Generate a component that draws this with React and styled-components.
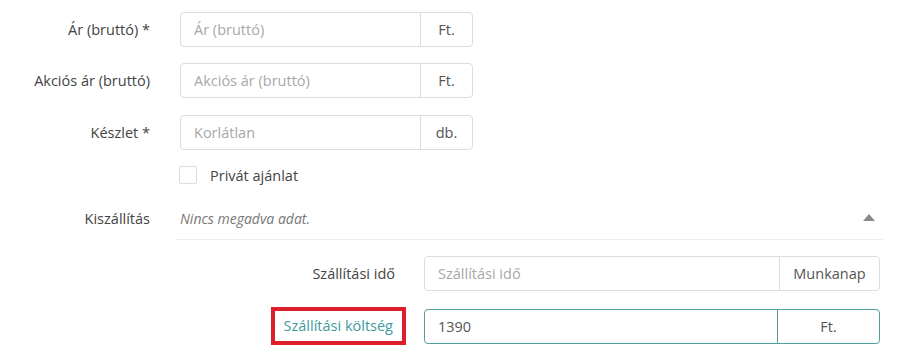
import React from "react";
import styled, { createGlobalStyle } from "styled-components";

const Global = createGlobalStyle`
  html, body { margin: 0; padding: 0; background: #fff; }
  body { font-family: "Open Sans", "Noto Sans", Arial, sans-serif; font-size: 14.5px; color: #444; }
`;

const Page = styled.div`
  width: 903px;
  height: 352px;
  overflow: hidden;
  padding-top: 12px;
  box-sizing: border-box;
`;

const Row = styled.div`
  display: grid;
  grid-template-columns: 150px 293px;
  column-gap: 30px;
  align-items: center;
  margin-bottom: ${(p) => p.$mb ?? 16}px;
`;

const Label = styled.label`
  text-align: right;
  color: #444;
  font-size: 14.5px;
`;

const Group = styled.div`
  display: flex;
  height: 35px;
  box-sizing: border-box;
  border: 1px solid ${(p) => (p.$active ? "#4d9fa0" : "#dcdcdc")};
  border-radius: 4px;
  background: #fff;
`;

const Input = styled.input`
  flex: 1;
  min-width: 0;
  border: none;
  outline: none;
  background: transparent;
  padding: 0 0 0 13px;
  font-family: inherit;
  font-size: 14.5px;
  color: #555;
  &::placeholder { color: #a8a8a8; }
`;

const Addon = styled.span`
  width: ${(p) => p.$w}px;
  flex: none;
  display: flex;
  align-items: center;
  justify-content: center;
  border-left: 1px solid ${(p) => (p.$active ? "#4d9fa0" : "#dcdcdc")};
  color: #555;
  font-size: 14.5px;
`;

const CheckRow = styled.div`
  display: flex;
  align-items: center;
  gap: 13px;
  margin-left: 179px;
  height: 18px;
  margin-bottom: 24px;
`;

const Box = styled.span`
  width: 18px;
  height: 18px;
  box-sizing: border-box;
  border: 1px solid #dcdcdc;
  border-radius: 2px;
`;

const CheckText = styled.span`
  color: #444;
  font-size: 14.5px;
`;

const ShipHead = styled.div`
  display: grid;
  grid-template-columns: 150px 1fr 20px;
  column-gap: 30px;
  align-items: center;
  height: 20px;
  width: 883px;
`;

const Empty = styled.span`
  font-style: italic;
  color: #777;
  font-size: 14px;
`;

const Caret = styled.span`
  width: 0;
  height: 0;
  border-left: 6px solid transparent;
  border-right: 6px solid transparent;
  border-bottom: 7px solid #8a8a8a;
  justify-self: start;
  margin-top: -2px;
`;

const Divider = styled.div`
  margin: 11px 20px 16px 176px;
  height: 1px;
  background: #eeeeee;
`;

const SubRow = styled.div`
  display: grid;
  grid-template-columns: 407px 456px;
  column-gap: 17px;
  align-items: center;
  margin-bottom: ${(p) => p.$mb ?? 15}px;
`;

const SubLabel = styled.label`
  justify-self: end;
  text-align: right;
  font-size: 14.5px;
  color: ${(p) => (p.$active ? "#3f9aa0" : "#444")};
  padding: ${(p) => (p.$marked ? "5px 9px 6px 9px" : "0 12px 0 0")};
  border: ${(p) => (p.$marked ? "4px solid #dc1f2b" : "none")};
  margin-right: ${(p) => (p.$marked ? "1px" : "0")};
`;

export default function App() {
  return (
    <Page>
      <Global />
      <Row>
        <Label>Ár (bruttó) *</Label>
        <Group>
          <Input placeholder="Ár (bruttó)" />
          <Addon $w={51}>Ft.</Addon>
        </Group>
      </Row>
      <Row $mb={17}>
        <Label>Akciós ár (bruttó)</Label>
        <Group>
          <Input placeholder="Akciós ár (bruttó)" />
          <Addon $w={51}>Ft.</Addon>
        </Group>
      </Row>
      <Row $mb={16}>
        <Label>Készlet *</Label>
        <Group>
          <Input placeholder="Korlátlan" />
          <Addon $w={51}>db.</Addon>
        </Group>
      </Row>
      <CheckRow>
        <Box />
        <CheckText>Privát ajánlat</CheckText>
      </CheckRow>
      <ShipHead>
        <Label>Kiszállítás</Label>
        <Empty>Nincs megadva adat.</Empty>
        <Caret />
      </ShipHead>
      <Divider />
      <SubRow $mb={16}>
        <SubLabel>Szállítási idő</SubLabel>
        <Group>
          <Input placeholder="Szállítási idő" />
          <Addon $w={99}>Munkanap</Addon>
        </Group>
      </SubRow>
      <SubRow>
        <SubLabel $active $marked>Szállítási költség</SubLabel>
        <Group $active>
          <Input defaultValue="1390" />
          <Addon $w={101} $active>Ft.</Addon>
        </Group>
      </SubRow>
    </Page>
  );
}
